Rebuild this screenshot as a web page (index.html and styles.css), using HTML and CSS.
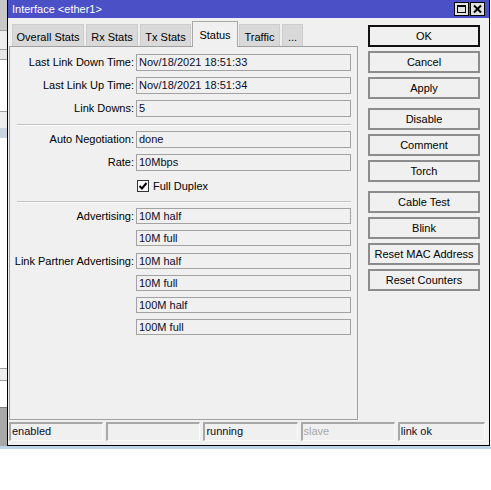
FILE: index.html
```html
<!DOCTYPE html>
<html>
<head>
<meta charset="utf-8">
<link rel="stylesheet" href="styles.css">
</head>
<body>
<div class="desk-left">
  <div class="s s1"></div><div class="s s2"></div><div class="s s3"></div><div class="s s2"></div>
  <div class="s s4"></div><div class="s s2"></div><div class="s s5"></div><div class="s s2"></div>
  <div class="s s6"></div><div class="s s7"></div><div class="s s8"></div><div class="s s2"></div>
  <div class="s s9"></div><div class="s s2"></div><div class="s s10"></div><div class="s s11"></div>
  <div class="s s12"></div>
</div>
<div class="blueband"></div>
<div class="window">
  <div class="titlebar">
    <span class="title">Interface &lt;ether1&gt;</span>
    <div class="tbtns">
      <div class="tbtn"><svg width="13" height="12" viewBox="0 0 13 12"><rect x="2.5" y="2.5" width="8" height="7" fill="none" stroke="#000" stroke-width="1"/><rect x="2" y="2" width="9" height="2" fill="#000"/></svg></div>
      <div class="tbtn"><svg width="13" height="12" viewBox="0 0 13 12"><path d="M3 2.5 L10 9.5 M10 2.5 L3 9.5" stroke="#000" stroke-width="2" fill="none"/></svg></div>
    </div>
  </div>
  <div class="main">
    <div class="leftcol">
      <div class="tabs">
        <div class="tab w1">Overall Stats</div>
        <div class="tab w2">Rx Stats</div>
        <div class="tab w3">Tx Stats</div>
        <div class="tab active w4">Status</div>
        <div class="tab w5">Traffic</div>
        <div class="tab w6">...</div>
      </div>
      <div class="panel">
        <div class="row"><div class="label">Last Link Down Time:</div><div class="field">Nov/18/2021 18:51:33</div></div>
        <div class="row"><div class="label">Last Link Up Time:</div><div class="field">Nov/18/2021 18:51:34</div></div>
        <div class="row"><div class="label">Link Downs:</div><div class="field">5</div></div>
        <div class="sep"></div>
        <div class="row"><div class="label">Auto Negotiation:</div><div class="field">done</div></div>
        <div class="row"><div class="label">Rate:</div><div class="field">10Mbps</div></div>
        <div class="row"><div class="label"></div><div class="check"><span class="box"><svg width="10" height="10" viewBox="0 0 10 10"><path d="M1.5 5 L4 7.5 L8.5 2" stroke="#000" stroke-width="2" fill="none"/></svg></span><span>Full Duplex</span></div></div>
        <div class="sep"></div>
        <div class="row small"><div class="label">Advertising:</div><div class="field">10M half</div></div>
        <div class="row small"><div class="label"></div><div class="field">10M full</div></div>
        <div class="row small lpa"><div class="label">Link Partner Advertising:</div><div class="field">10M half</div></div>
        <div class="row small"><div class="label"></div><div class="field">10M full</div></div>
        <div class="row small"><div class="label"></div><div class="field">100M half</div></div>
        <div class="row small"><div class="label"></div><div class="field">100M full</div></div>
      </div>
    </div>
    <div class="rightcol">
      <div class="btn default">OK</div>
      <div class="btn">Cancel</div>
      <div class="btn">Apply</div>
      <div class="btn group">Disable</div>
      <div class="btn">Comment</div>
      <div class="btn">Torch</div>
      <div class="btn group">Cable Test</div>
      <div class="btn">Blink</div>
      <div class="btn">Reset MAC Address</div>
      <div class="btn">Reset Counters</div>
    </div>
  </div>
  <div class="statusbar">
    <div class="cell">enabled</div>
    <div class="cell"></div>
    <div class="cell">running</div>
    <div class="cell dim">slave</div>
    <div class="cell last">link ok</div>
  </div>
</div>
</body>
</html>
```
FILE: styles.css
```css
html, body {
  margin: 0;
  padding: 0;
}
body {
  width: 491px;
  height: 490px;
  overflow: hidden;
  position: relative;
  background: #ffffff;
  font-family: "Liberation Sans", Arial, sans-serif;
  font-size: 11px;
  color: #000;
}
.desk-left {
  position: absolute;
  left: 0;
  top: 0;
  width: 7px;
  display: flex;
  flex-direction: column;
}
.s { width: 7px; }
.s1 { height: 30px; background: #c8c8c8; }
.s2 { height: 1px; background: #a0a0a0; }
.s3 { height: 18px; background: #ececec; }
.s4 { height: 9px; background: #e6e6e6; }
.s5 { height: 51px; background: #ffffff; }
.s6 { height: 16px; background: #ececec; }
.s7 { height: 10px; background: #c9d3e2; }
.s8 { height: 230px; background: #ffffff; }
.s9 { height: 11px; background: #eeeeee; }
.s10 { height: 26px; background: #ffffff; }
.s11 { height: 1px; background: #808080; }
.s12 { height: 38px; background: #a8a8a8; }
.blueband {
  position: absolute;
  left: 0;
  top: 446px;
  width: 491px;
  height: 3px;
  background: #bcd3ec;
}
.window {
  position: absolute;
  left: 7px;
  top: 0;
  width: 481px;
  height: 445px;
  border-left: 1px solid #000;
  border-right: 1px solid #000;
  border-bottom: 1px solid #000;
  background: #f0f0f0;
  display: flex;
  flex-direction: column;
}
.titlebar {
  height: 18px;
  background: #4b50c7;
  display: flex;
  align-items: center;
  justify-content: space-between;
  padding-left: 4px;
  padding-right: 4px;
}
.title {
  color: #ffffff;
  font-size: 11px;
  line-height: 18px;
}
.tbtns {
  display: flex;
  gap: 1px;
  align-self: flex-start;
  margin-top: 2px;
}
.tbtn {
  width: 13px;
  height: 12px;
  border: 1px solid #000;
  background: #e2e2e2;
  display: flex;
}
.main {
  height: 402px;
  display: flex;
  padding-top: 3px;
  box-sizing: border-box;
}
.leftcol {
  margin-left: 1px;
  width: 349px;
  display: flex;
  flex-direction: column;
}
.tabs {
  height: 25px;
  display: flex;
  align-items: flex-end;
  padding-left: 3px;
  gap: 2px;
  position: relative;
  z-index: 1;
}
.tab {
  height: 22px;
  box-sizing: border-box;
  background: #d9d9d9;
  border: 1px solid #cdcdcd;
  border-bottom: none;
  display: flex;
  align-items: center;
  justify-content: center;
  line-height: 12px;
  padding-top: 2px;
  white-space: nowrap;
}
.tab.active {
  height: 26px;
  margin-bottom: -1px;
  background: #f0f0f0;
  border: 1px solid #a8a8a8;
  border-bottom: none;
  padding-top: 0;
  margin-left: -1px;
  margin-right: -1px;
}
.w1 { width: 72px; }
.w2 { width: 52px; }
.w3 { width: 51px; }
.w4 { width: 46px; }
.w5 { width: 41px; }
.w6 { width: 21px; }
.panel {
  height: 374px;
  box-sizing: border-box;
  border: 1px solid #a0a0a0;
  background: #f0f0f0;
  padding-top: 7px;
  display: flex;
  flex-direction: column;
}
.row {
  display: flex;
  height: 17px;
  margin-bottom: 6px;
  align-items: stretch;
}
.row.small { height: 16px; }
.row.lpa { margin-top: 1px; }
.label {
  width: 124px;
  margin-right: 2px;
  text-align: right;
  line-height: 17px;
  white-space: nowrap;
}
.small .label { line-height: 16px; }
.field {
  width: 215px;
  box-sizing: border-box;
  border: 1px solid #a2a2a2;
  background: #f0f0f0;
  padding-left: 2px;
  line-height: 15px;
  color: #0c0c2c;
  white-space: nowrap;
}
.small .field { line-height: 14px; }
.check {
  display: flex;
  align-items: center;
  gap: 4px;
  padding-left: 1px;
}
.box {
  width: 12px;
  height: 12px;
  box-sizing: border-box;
  border: 1px solid #333;
  background: #f8f8f8;
  display: flex;
  align-items: center;
  justify-content: center;
}
.sep {
  margin-left: 7px;
  width: 334px;
  height: 1px;
  background: #c4c4c4;
  border-bottom: 1px solid #fafafa;
  margin-top: 1px;
  margin-bottom: 5px;
}
.rightcol {
  margin-left: 10px;
  width: 112px;
  padding-top: 4px;
  display: flex;
  flex-direction: column;
  gap: 4px;
}
.btn {
  height: 22px;
  box-sizing: border-box;
  border: 2px solid #8c8c8c;
  background: #f0f0f0;
  text-align: center;
  line-height: 18px;
  white-space: nowrap;
}
.btn.default { border-color: #111; }
.btn.group { margin-top: 5px; }
.statusbar {
  display: flex;
  gap: 3px;
  padding: 2px 4px 4px 1px;
  height: 19px;
}
.cell {
  width: 95px;
  height: 19px;
  box-sizing: border-box;
  border-top: 2px solid #a8a8a8;
  border-left: 2px solid #a8a8a8;
  border-right: 1px solid #fafafa;
  border-bottom: 1px solid #fafafa;
  padding-left: 1px;
  line-height: 15px;
  color: #0c0c2c;
  white-space: nowrap;
}
.cell.dim { color: #a8a8a8; }
.cell.last { width: 88px; }
```
